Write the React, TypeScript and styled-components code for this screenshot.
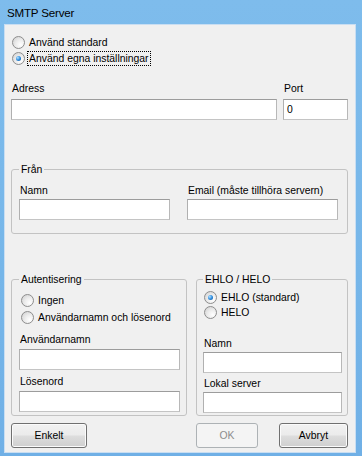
import React from 'react';
import styled, {createGlobalStyle, css} from 'styled-components';

const GlobalStyle = createGlobalStyle`
  html, body {
    margin: 0;
    padding: 0;
    background: #fff;
  }
  body {
    font-family: "Liberation Sans", Arial, sans-serif;
    font-size: 10.4px;
    color: #000;
  }
  * {
    box-sizing: border-box;
  }
`;

const Window = styled.div`
  width: 362px;
  height: 456px;
  display: flex;
  flex-direction: column;
  padding: 0 7px 4px 5px;
  background: linear-gradient(#7ebcec, #76b6e9 60%, #70b0e6);
`;

const TitleBar = styled.div`
  height: 25px;
  display: flex;
  align-items: center;
  padding-left: 2px;
  font-size: 11.6px;
  line-height: 14px;
  letter-spacing: -0.2px;
`;

const Client = styled.div`
  flex: 1;
  display: flex;
  flex-direction: column;
  padding: 9px 7px 0 6px;
  background: #f0f0f0;
  box-shadow: 0 0 0 1px #c9def2;
`;

const RadioList = styled.div`
  display: flex;
  flex-direction: column;
`;

const RadioRow = styled.div<{$h: number; $indent: number}>`
  height: ${p => p.$h}px;
  display: flex;
  align-items: center;
  gap: 3px;
  padding-left: ${p => p.$indent}px;
  line-height: 13px;
`;

const RadioDot = styled.span<{$checked?: boolean}>`
  position: relative;
  flex: none;
  width: 13px;
  height: 13px;
  border-radius: 50%;
  border: 1px solid #8d8d8d;
  background: radial-gradient(circle at 70% 70%, #ffffff 0%, #ececec 45%, #cdcdcd 100%);
  ${p => p.$checked && css`
    &::after {
      content: '';
      position: absolute;
      left: 3px;
      top: 3px;
      width: 5px;
      height: 5px;
      border-radius: 50%;
      background: radial-gradient(circle at 35% 35%, #b4e2ff 0%, #2f8ee0 50%, #104d8e 100%);
    }
  `}
`;

const RadioText = styled.span<{$focus?: boolean}>`
  padding: 0 1px;
  ${p => p.$focus && css`
    outline: 1px dotted #000;
    outline-offset: 0;
  `}
`;

const TopGrid = styled.div`
  display: grid;
  grid-template-columns: 266px 65px;
  column-gap: 6px;
  margin-top: 16px;
`;

const FieldBox = styled.div<{$top: number}>`
  display: flex;
  flex-direction: column;
  margin-top: ${p => p.$top}px;
`;

const FieldLabel = styled.label<{$gap: number}>`
  line-height: 13px;
  padding-left: 1px;
  margin-bottom: ${p => p.$gap}px;
  white-space: nowrap;
`;

const TextBox = styled.input`
  width: 100%;
  height: 21px;
  margin: 0;
  padding: 0 3px;
  border: 1px solid #abadb3;
  border-color: #9c9c9c #b8b8b8 #c4c4c4 #b0b0b0;
  background: #fff;
  font: inherit;
  color: #000;
  outline: none;
`;

const Group = styled.fieldset<{$pad: string; $top?: number}>`
  margin: 0;
  margin-top: ${p => p.$top ?? 0}px;
  min-width: 0;
  padding: ${p => p.$pad};
  border: 1px solid #c3c3c3;
  border-radius: 3px;
`;

const Legend = styled.legend`
  padding: 0 2px;
  margin: 0;
  line-height: 13px;
`;

const FromGrid = styled.div`
  display: grid;
  grid-template-columns: 151px 151px;
  column-gap: 17px;
`;

const BottomGrid = styled.div`
  display: grid;
  grid-template-columns: 176px 152px;
  column-gap: 9px;
  margin-top: 39px;
`;

const ButtonBar = styled.div`
  display: flex;
  justify-content: space-between;
  margin-top: 7px;
`;

const ButtonPair = styled.div`
  display: flex;
  gap: 21px;
`;

const Button = styled.button<{$w: number}>`
  width: ${p => p.$w}px;
  height: 25px;
  margin: 0;
  padding: 0;
  font: inherit;
  color: #000;
  border: 1px solid #707070;
  border-radius: 3px;
  background: linear-gradient(#f2f2f2 0%, #ebebeb 48%, #dddddd 52%, #cfcfcf 100%);
  box-shadow: inset 0 0 0 1px #fbfbfb;
  &:disabled {
    color: #8d8d8d;
    border-color: #adb2b5;
    background: #f4f4f4;
    box-shadow: none;
  }
`;

type FieldProps = {
  label: string;
  top?: number;
  gap: number;
  value?: string;
};

const Field = ({label, top = 0, gap, value = ''}: FieldProps) => (
  <FieldBox $top={top}>
    <FieldLabel $gap={gap}>{label}</FieldLabel>
    <TextBox defaultValue={value} />
  </FieldBox>
);

type RadioProps = {
  text: string;
  h: number;
  indent: number;
  checked?: boolean;
  focus?: boolean;
};

const Radio = ({text, h, indent, checked, focus}: RadioProps) => (
  <RadioRow $h={h} $indent={indent}>
    <RadioDot $checked={checked} />
    <RadioText $focus={focus}>{text}</RadioText>
  </RadioRow>
);

const App: React.FunctionComponent = () => {
  return (
    <>
      <GlobalStyle />
      <Window>
        <TitleBar>SMTP Server</TitleBar>
        <Client>
          <RadioList>
            <Radio text="Använd standard" h={16} indent={1} />
            <Radio text="Använd egna inställningar" h={16} indent={1} checked focus />
          </RadioList>

          <TopGrid>
            <Field label="Adress" gap={4} />
            <Field label="Port" gap={4} value="0" />
          </TopGrid>

          <Group $pad="8px 9px 13px 7px" $top={43}>
            <Legend>Från</Legend>
            <FromGrid>
              <Field label="Namn" gap={2} />
              <Field label="Email (måste tillhöra servern)" gap={2} />
            </FromGrid>
          </Group>

          <BottomGrid>
            <Group $pad="6px 6px 3px 7px">
              <Legend>Autentisering</Legend>
              <RadioList>
                <Radio text="Ingen" h={17} indent={2} />
                <Radio text="Användarnamn och lösenord" h={17} indent={2} />
              </RadioList>
              <Field label="Användarnamn" top={7} gap={3} />
              <Field label="Lösenord" top={5} gap={3} />
            </Group>
            <Group $pad="4px 5px 2px 6px">
              <Legend>EHLO / HELO</Legend>
              <RadioList>
                <Radio text="EHLO (standard)" h={15} indent={1} checked />
                <Radio text="HELO" h={15} indent={1} />
              </RadioList>
              <Field label="Namn" top={17} gap={2} />
              <Field label="Lokal server" top={4} gap={2} />
            </Group>
          </BottomGrid>

          <ButtonBar>
            <Button $w={76}>Enkelt</Button>
            <ButtonPair>
              <Button $w={62} disabled>OK</Button>
              <Button $w={69}>Avbryt</Button>
            </ButtonPair>
          </ButtonBar>
        </Client>
      </Window>
    </>
  );
};

export default App;
